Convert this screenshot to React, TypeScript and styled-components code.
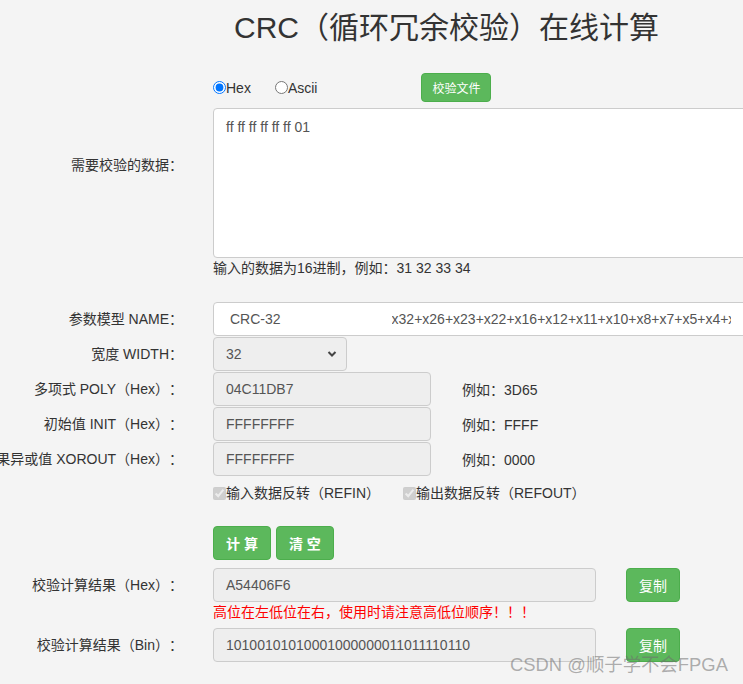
import React from "react"
import styled, { createGlobalStyle } from "styled-components"

const GlobalStyle = createGlobalStyle`
  html, body {
    margin: 0;
    padding: 0;
    background: #f4f4f4;
    overflow: hidden;
  }
  body {
    font-family: "Liberation Sans", Arial, "Noto Sans CJK SC", sans-serif;
    font-size: 14px;
    color: #333;
    text-spacing-trim: space-all;
  }
`

const Page = styled.div`
  position: relative;
  width: 743px;
  height: 684px;
  overflow: hidden;
`

const Row = styled.div<{ $mt?: number }>`
  display: grid;
  grid-template-columns: 183px 1fr;
  column-gap: 30px;
  margin-top: ${(p) => p.$mt ?? 0}px;
`

const Label = styled.div<{ $pt?: number }>`
  display: flex;
  justify-content: flex-end;
  white-space: nowrap;
  line-height: 34px;
  padding-top: ${(p) => p.$pt ?? 0}px;
`

const Field = styled.div<{ $h?: number }>`
  display: flex;
  align-items: center;
  min-width: 0;
  height: ${(p) => (p.$h ? `${p.$h}px` : "auto")};
`

const FieldCol = styled.div`
  display: flex;
  flex-direction: column;
`

const Title = styled.h1`
  width: 467px;
  margin: 10px 0 0;
  font-size: 30px;
  line-height: 36px;
  font-weight: 400;
  text-align: center;
  color: #333;
  white-space: nowrap;
`

const RadioLabel = styled.label<{ $mr?: number }>`
  display: flex;
  align-items: center;
  margin-right: ${(p) => p.$mr ?? 0}px;
  input {
    margin: 0;
    width: 13px;
    height: 13px;
  }
`

const Button = styled.button<{ $small?: boolean; $bold?: boolean; $ml?: number }>`
  height: ${(p) => (p.$small ? 29 : 34)}px;
  margin-left: ${(p) => p.$ml ?? 0}px;
  padding: 0 ${(p) => (p.$small ? 10 : 12)}px;
  background: #5cb85c;
  border: 1px solid #4cae4c;
  border-radius: 4px;
  color: #fff;
  font-family: inherit;
  font-size: ${(p) => (p.$small ? 12 : 14)}px;
  font-weight: ${(p) => (p.$bold ? 700 : 400)};
  white-space: pre;
  cursor: pointer;
`

const TextArea = styled.textarea`
  box-sizing: border-box;
  width: 600px;
  height: 150px;
  padding: 8px 12px;
  border: 1px solid #ccc;
  border-radius: 4px;
  background: #fff;
  font-family: inherit;
  font-size: 14px;
  line-height: 20px;
  color: #555;
  resize: none;
`

const Hint = styled.div<{ $red?: boolean }>`
  line-height: 20px;
  color: ${(p) => (p.$red ? "#f00" : "#333")};
  white-space: nowrap;
`

const Box = styled.div<{ $w: number; $white?: boolean; $pl?: number }>`
  box-sizing: border-box;
  flex: none;
  display: flex;
  align-items: center;
  width: ${(p) => p.$w}px;
  height: 34px;
  padding-left: ${(p) => p.$pl ?? 12}px;
  border: 1px solid #ccc;
  border-radius: 4px;
  background: ${(p) => (p.$white ? "#fff" : "#eee")};
  color: #555;
  white-space: nowrap;
  overflow: hidden;
`

const Poly = styled.span`
  display: inline-block;
  width: 339px;
  margin-left: 111px;
  overflow: hidden;
`

const SelectWrap = styled.div`
  position: relative;
  width: 134px;
  height: 34px;
  svg {
    position: absolute;
    right: 10px;
    top: 13px;
    pointer-events: none;
  }
`

const Select = styled.select`
  box-sizing: border-box;
  appearance: none;
  width: 134px;
  height: 34px;
  padding-left: 12px;
  border: 1px solid #ccc;
  border-radius: 4px;
  background: #eee;
  color: #555;
  font-family: inherit;
  font-size: 14px;
`

const Example = styled.span`
  margin-left: 31px;
  white-space: nowrap;
`

const CheckItem = styled.label<{ $w?: number }>`
  display: flex;
  align-items: center;
  width: ${(p) => (p.$w ? `${p.$w}px` : "auto")};
  line-height: 20px;
  white-space: nowrap;
  input {
    margin: 0;
    width: 13px;
    height: 13px;
  }
`

const ButtonGroup = styled.div`
  display: flex;
  gap: 5px;
`

const Watermark = styled.div`
  position: absolute;
  left: 510px;
  top: 654px;
  font-size: 18.4px;
  line-height: 22px;
  color: rgba(110, 110, 110, 0.55);
  white-space: nowrap;
`

const Chevron = () => (
  <svg width="10" height="8" viewBox="0 0 10 8">
    <path d="M1.5 2 L5 5.5 L8.5 2" fill="none" stroke="#444" strokeWidth="2" />
  </svg>
)

export default function App() {
  return (
    <Page>
      <GlobalStyle />
      <Row>
        <div />
        <Title>CRC（循环冗余校验）在线计算</Title>
      </Row>

      <Row $mt={27}>
        <div />
        <Field $h={29}>
          <RadioLabel $mr={24}>
            <input type="radio" name="fmt" defaultChecked />
            Hex
          </RadioLabel>
          <RadioLabel $mr={104}>
            <input type="radio" name="fmt" />
            Ascii
          </RadioLabel>
          <Button $small>校验文件</Button>
        </Field>
      </Row>

      <Row $mt={6}>
        <Label $pt={40}>需要校验的数据：</Label>
        <FieldCol>
          <TextArea defaultValue="ff ff ff ff ff ff 01" />
          <Hint>输入的数据为16进制，例如：31 32 33 34</Hint>
        </FieldCol>
      </Row>

      <Row $mt={24}>
        <Label>参数模型 NAME：</Label>
        <Field>
          <Box $w={600} $white $pl={16}>
            CRC-32
            <Poly>x32+x26+x23+x22+x16+x12+x11+x10+x8+x7+x5+x4+x2+x+1</Poly>
          </Box>
        </Field>
      </Row>

      <Row $mt={1}>
        <Label>宽度 WIDTH：</Label>
        <Field>
          <SelectWrap>
            <Select defaultValue="32">
              <option>4</option>
              <option>5</option>
              <option>6</option>
              <option>7</option>
              <option>8</option>
              <option>16</option>
              <option>32</option>
            </Select>
            <Chevron />
          </SelectWrap>
        </Field>
      </Row>

      <Row $mt={1}>
        <Label>多项式 POLY（Hex）：</Label>
        <Field>
          <Box $w={218}>04C11DB7</Box>
          <Example>例如：3D65</Example>
        </Field>
      </Row>

      <Row $mt={1}>
        <Label>初始值 INIT（Hex）：</Label>
        <Field>
          <Box $w={218}>FFFFFFFF</Box>
          <Example>例如：FFFF</Example>
        </Field>
      </Row>

      <Row $mt={1}>
        <Label>结果异或值 XOROUT（Hex）：</Label>
        <Field>
          <Box $w={218}>FFFFFFFF</Box>
          <Example>例如：0000</Example>
        </Field>
      </Row>

      <Row $mt={7}>
        <div />
        <Field>
          <CheckItem $w={190}>
            <input type="checkbox" defaultChecked disabled />
            输入数据反转（REFIN）
          </CheckItem>
          <CheckItem>
            <input type="checkbox" defaultChecked disabled />
            输出数据反转（REFOUT）
          </CheckItem>
        </Field>
      </Row>

      <Row $mt={23}>
        <div />
        <ButtonGroup>
          <Button $bold>计 算</Button>
          <Button $bold>清 空</Button>
        </ButtonGroup>
      </Row>

      <Row $mt={8}>
        <Label>校验计算结果（Hex）：</Label>
        <FieldCol>
          <Field>
            <Box $w={383}>A54406F6</Box>
            <Button $ml={30}>复制</Button>
          </Field>
          <Hint $red>高位在左低位在右，使用时请注意高低位顺序！！！</Hint>
        </FieldCol>
      </Row>

      <Row $mt={6}>
        <Label>校验计算结果（Bin）：</Label>
        <Field>
          <Box $w={383}>10100101010001000000011011110110</Box>
          <Button $ml={30}>复制</Button>
        </Field>
      </Row>

      <Watermark>CSDN @顺子学不会FPGA</Watermark>
    </Page>
  )
}
